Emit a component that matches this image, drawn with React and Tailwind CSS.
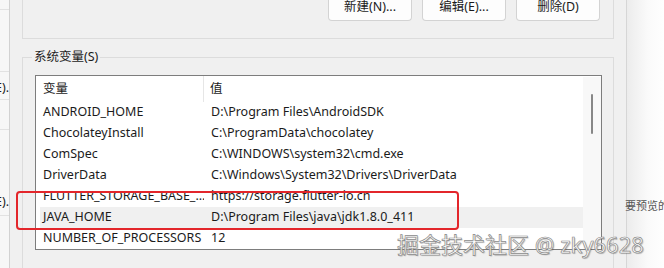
import React from "react";

const rows = [
  ["ANDROID_HOME", "D:\\Program Files\\AndroidSDK"],
  ["ChocolateyInstall", "C:\\ProgramData\\chocolatey"],
  ["ComSpec", "C:\\WINDOWS\\system32\\cmd.exe"],
  ["DriverData", "C:\\Windows\\System32\\Drivers\\DriverData"],
  ["FLUTTER_STORAGE_BASE_...", "https://storage.flutter-io.cn"],
  ["JAVA_HOME", "D:\\Program Files\\java\\jdk1.8.0_411"],
  ["NUMBER_OF_PROCESSORS", "12"],
];

function Btn({ children }) {
  return (
    <div className="flex h-[21px] w-[84px] items-center justify-center rounded-b-[4px] border border-t-0 border-[#d3d3d3] bg-[#fdfdfd] pb-[6px] leading-[14px]">
      {children}
    </div>
  );
}

export default function App() {
  return (
    <div className="relative flex h-[268px] w-[664px] overflow-hidden bg-white font-['Noto_Sans','Noto_Sans_CJK_SC',sans-serif] text-[12.5px] text-[#1b1b1b]">
      {/* left background window strip */}
      <div className="flex w-[10px] shrink-0 flex-col border-r border-[#d2d2d2] bg-[#f7f7f7]">
        <div className="h-[10px] border-b border-[#e2e2e2]" />
        <div className="h-[62px] border-b border-[#e2e2e2]" />
        <div className="flex h-[28px] items-center justify-end overflow-hidden border-b border-[#e2e2e2] pt-[5px]">
          <span className="shrink-0 whitespace-nowrap">编辑(E).</span>
        </div>
        <div className="h-[30px] border-b border-[#e2e2e2]" />
        <div className="h-[59px]" />
        <div className="flex h-[20px] items-center justify-end overflow-hidden pt-[6px]">
          <span className="shrink-0 whitespace-nowrap">编辑(E).</span>
        </div>
        <div className="h-[7px] border-b border-[#e2e2e2]" />
      </div>

      {/* dialog */}
      <div className="flex w-[617px] shrink-0 flex-col border-r border-[#d6d6d6] bg-[#f0f0f0] pl-[12px] pr-[12px]">
        {/* user variables group (bottom part) */}
        <div className="flex h-[39px] items-start justify-end gap-[11px] border-x border-b border-[#dcdcdc] pr-[13px]">
          <Btn>新建(N)...</Btn>
          <div className="-ml-[1px]">
            <Btn>编辑(E)...</Btn>
          </div>
          <div className="-ml-[1px]">
            <Btn>删除(D)</Btn>
          </div>
        </div>

        {/* system variables group */}
        <div className="mt-[18px] flex flex-1 flex-col border-x border-t border-[#dcdcdc] pl-[12px] pr-[11px]">
          <div className="-ml-[3px] -mt-[10px] w-fit bg-[#f0f0f0] px-[2px] leading-[18px]">
            系统变量(S)
          </div>
          <div className="mt-[9px] flex h-[175px] border border-[#7d7d7d] bg-white">
            <div className="flex flex-1 flex-col">
              <div className="flex h-[26px]">
                <div className="flex w-[168px] items-center border-r border-[#e6e6e6] pl-[7px]">
                  变量
                </div>
                <div className="flex items-center pl-[6px]">值</div>
              </div>
              {rows.map(([k, v]) => (
                <div
                  key={k}
                  className={
                    "ml-[4px] flex h-[21px] items-center whitespace-nowrap " +
                    (k === "JAVA_HOME" ? "bg-[#f0f0f0]" : "")
                  }
                >
                  <div className="w-[164px] overflow-hidden pl-[3px]">{k}</div>
                  <div className="pl-[7px]">{v}</div>
                </div>
              ))}
            </div>
            <div className="mt-[1px] flex w-[18px] justify-center bg-[#f8f8f8] pt-[17px]">
              <div className="h-[40px] w-[2px] rounded-full bg-[#878787]" />
            </div>
          </div>
        </div>
      </div>

      {/* background window on the right */}
      <div className="flex flex-1 flex-col bg-gradient-to-r from-[#ececec] via-[#fafafa] to-white">
        <div className="-ml-[2px] mt-[199px] whitespace-nowrap text-[11px] leading-[14px] text-[#555]">
          要预览的
        </div>
      </div>

      {/* red annotation rectangle */}
      <div className="pointer-events-none absolute left-[16px] top-[191px] h-[39px] w-[443px] rounded-[4px] border-2 border-[#e3262b]" />

      {/* watermark */}
      <div className="pointer-events-none absolute left-[397px] top-[230px] whitespace-nowrap font-['Noto_Sans','Noto_Sans_CJK_SC',sans-serif] text-[22px] leading-[28px] text-white [-webkit-text-stroke:0.7px_#8a8a8a] [text-shadow:1px_1px_1px_rgba(0,0,0,0.25)]">
        掘金技术社区 @ zky6628
      </div>
    </div>
  );
}
